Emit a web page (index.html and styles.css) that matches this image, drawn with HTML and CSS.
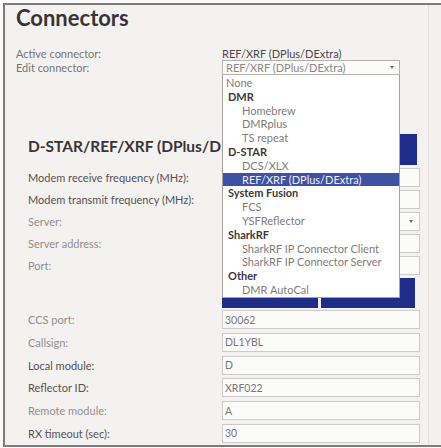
FILE: index.html
```html
<!DOCTYPE html>
<html lang="en">
<head>
<meta charset="utf-8">
<title>Connectors</title>
<link rel="stylesheet" href="styles.css">
</head>
<body>
<div class="window">
  <main class="page">
    <h1 class="title">Connectors</h1>

    <div class="summary">
      <div class="srow">
        <span class="slabel">Active connector:</span>
        <span class="svalue">REF/XRF (DPlus/DExtra)</span>
      </div>
      <div class="srow srow-edit">
        <span class="slabel">Edit connector:</span>
        <div class="picker">
          <div class="select">REF/XRF (DPlus/DExtra)<span class="caret"></span></div>
          <ul class="menu">
            <li>None</li>
            <li class="group">DMR</li>
            <li class="child">Homebrew</li>
            <li class="child">DMRplus</li>
            <li class="child">TS repeat</li>
            <li class="group">D-STAR</li>
            <li class="child">DCS/XLX</li>
            <li class="child picked">REF/XRF (DPlus/DExtra)</li>
            <li class="group">System Fusion</li>
            <li class="child">FCS</li>
            <li class="child">YSFReflector</li>
            <li class="group">SharkRF</li>
            <li class="child">SharkRF IP Connector Client</li>
            <li class="child">SharkRF IP Connector Server</li>
            <li class="group">Other</li>
            <li class="child">DMR AutoCal</li>
          </ul>
        </div>
      </div>
    </div>

    <section class="card">
      <div class="card-head">
        <h2>D-STAR/REF/XRF (DPlus/DExtra)</h2>
        <div class="btn head-btn"></div>
      </div>

      <div class="fields fields-top">
        <label class="flabel dark">Modem receive frequency (MHz):</label>
        <div class="input"></div>
        <label class="flabel dark">Modem transmit frequency (MHz):</label>
        <div class="input"></div>
        <label class="flabel">Server:</label>
        <div class="input input-select"><span class="caret"></span></div>
        <label class="flabel">Server address:</label>
        <div class="input"></div>
        <label class="flabel">Port:</label>
        <div class="input"></div>
        <span></span>
        <div class="actions">
          <div class="btn btn-a"></div>
          <div class="btn btn-b"></div>
        </div>
      </div>

      <div class="fields fields-bottom">
        <label class="flabel">CCS port:</label>
        <div class="input">30062</div>
        <label class="flabel">Callsign:</label>
        <div class="input">DL1YBL</div>
        <label class="flabel dark">Local module:</label>
        <div class="input">D</div>
        <label class="flabel dark">Reflector ID:</label>
        <div class="input">XRF022</div>
        <label class="flabel">Remote module:</label>
        <div class="input">A</div>
        <label class="flabel dark">RX timeout (sec):</label>
        <div class="input">30</div>
      </div>
    </section>
  </main>
  <div class="scrollbar"></div>
</div>
</body>
</html>
```

FILE: styles.css
```css
* {
  box-sizing: border-box;
}

html,
body {
  margin: 0;
  padding: 0;
}

body {
  width: 441px;
  height: 448px;
  overflow: hidden;
  background: #fbfbfb;
  font-family: Lato, "Open Sans", sans-serif;
}

/* framed app window */
.window {
  margin: 3px 0 0 3px;
  height: 444px;
  display: flex;
  overflow: hidden;
  background: #f3f2f0;
  border: 2px solid #7d7b7c;
  border-right: 0;
}

.page {
  flex: 1;
  padding-left: 11px;
}

.scrollbar {
  width: 13px;
  background: #f2f1f0;
  border-left: 1px solid #e4e2e1;
}

.title {
  margin: 0;
  font-size: 22px;
  line-height: 26px;
  font-weight: 700;
  color: #3a3337;
}

/* active / edit connector */
.summary {
  margin-top: 15px;
  font-size: 11px;
  color: #7a7375;
}

.srow {
  display: flex;
  align-items: center;
  height: 14px;
}

.srow-edit {
  height: 15px;
}

.slabel {
  width: 206px;
  flex: none;
}

.svalue {
  color: #4f484b;
}

.picker {
  position: relative;
  width: 178px;
  height: 15px;
}

.select {
  height: 15px;
  display: flex;
  align-items: center;
  justify-content: space-between;
  padding-left: 3px;
  background: #fbfbfa;
  border: 1px solid #b5b2b2;
  color: #8d8789;
}

.caret {
  width: 0;
  height: 0;
  margin-right: 5px;
  border-left: 2px solid transparent;
  border-right: 2px solid transparent;
  border-top: 3px solid #6f6a6c;
}

/* open option list, drawn over the settings card */
.menu {
  position: absolute;
  top: 100%;
  left: 0;
  z-index: 5;
  width: 100%;
  margin: 0;
  padding: 1px 0 0;
  list-style: none;
  background: #ffffff;
  border: 1px solid #a3a1a1;
  border-top: 0;
}

.menu li {
  height: 13.8px;
  line-height: 13.8px;
  padding-left: 3px;
  font-size: 11px;
  white-space: nowrap;
  color: #817b7d;
}

.menu .group {
  padding-left: 5px;
  font-weight: 700;
  color: #3f383c;
}

.menu .child {
  padding-left: 19px;
}

.menu .picked {
  background: #3f51a3;
  color: #eceef8;
}

/* connector settings */
.card {
  margin-top: 59px;
  padding-left: 12px;
}

.card-head {
  display: flex;
  justify-content: space-between;
  height: 31px;
}

.card-head h2 {
  margin: 2px 0 0;
  font-size: 15.5px;
  line-height: 20px;
  font-weight: 700;
  color: #3a3337;
  white-space: nowrap;
}

.btn {
  background: #1f2c88;
}

.head-btn {
  width: 90px;
  margin-right: 11px;
}

.fields {
  display: grid;
  grid-template-columns: 194px 198px;
  align-items: center;
}

.fields-top {
  margin-top: 3px;
  row-gap: 3px;
}

.fields-bottom {
  margin-top: 2px;
  row-gap: 3.75px;
}

.flabel {
  font-size: 11px;
  color: #938d8f;
  white-space: nowrap;
}

.flabel.dark {
  color: #585154;
}

.input {
  height: 19px;
  display: flex;
  align-items: center;
  padding-left: 2px;
  background: #fbfbfa;
  border: 1px solid #cdcaca;
  font-size: 10.5px;
  color: #7b7577;
}

.input-select {
  justify-content: flex-end;
}

.input-select .caret {
  margin-right: 6px;
}

.actions {
  display: flex;
  gap: 3px;
  height: 30px;
}

.btn-a {
  width: 96px;
}

.btn-b {
  width: 94px;
}
```
